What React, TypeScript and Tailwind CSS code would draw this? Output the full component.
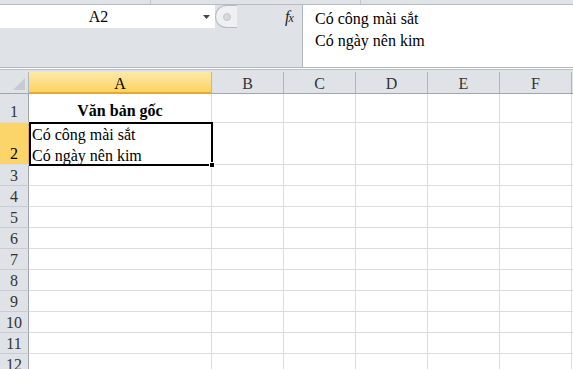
import React from "react";

const cols = ["B", "C", "D", "E", "F"];
const restRows = [3, 4, 5, 6, 7, 8, 9, 10, 11, 12];

export default function App() {
  return (
    <div
      className="w-[573px] h-[369px] overflow-hidden bg-[#dfe3e8] text-black relative"
      style={{ fontFamily: '"Liberation Serif", "Times New Roman", serif' }}
    >
      {/* ribbon bottom strip */}
      <div className="h-[5px] border-b border-[#b6bcc4] flex">
        <div className="w-[151px] border-r border-[#c3c8cf]" />
        <div className="w-[210px] border-r border-[#c3c8cf]" />
      </div>

      {/* formula bar */}
      <div className="h-[63px] flex border-b border-[#b0b6be]">
        <div className="w-[303px] flex flex-col border-r border-[#b0b6be]">
          <div className="h-[23px] flex items-center">
            <div className="w-[215px] h-[23px] bg-white flex items-center relative">
              <div className="flex-1 text-center text-[16px] leading-none">A2</div>
              <div className="w-[18px] flex items-center justify-center">
                <svg width="7" height="4" viewBox="0 0 7 4">
                  <path d="M0 0 H7 L3.5 4 Z" fill="#444" />
                </svg>
              </div>
            </div>
            <div className="h-[23px] w-[22px] flex items-center">
              <div className="w-[22px] h-[23px] rounded-l-full bg-[#eef0f3] border border-[#b7bcc3] border-r-0 flex items-center justify-center">
                <div className="w-[8px] h-[8px] rounded-full bg-[#d5d9de] border border-[#c4c9cf]" />
              </div>
            </div>
            <div className="flex-1" />
            <div
              className="w-[17px] text-[16px] italic text-[#222] leading-none"
              style={{ letterSpacing: "-1px" }}
            >
              f<span className="text-[12px]">x</span>
            </div>
          </div>
          <div className="flex-1" />
        </div>
        <div className="flex-1 bg-white pl-[12px] pt-[3px] text-[16px] leading-[22px]">
          <div>Có công mài sắt</div>
          <div>Có ngày nên kim</div>
        </div>
      </div>

      {/* gap */}
      <div className="h-[2px] bg-white border-b border-[#b9bec5]" />
      <div className="h-[2px]" />

      {/* grid */}
      <div className="bg-white">
        {/* header row */}
        <div className="flex h-[22px] bg-[#dfe3e8] border-b border-[#9fa6ae]">
          <div className="w-[29px] border-r border-[#b0b6be] relative flex-none">
            <svg className="absolute right-[3px] bottom-[3px]" width="12" height="12" viewBox="0 0 12 12">
              <path d="M12 0 V12 H0 Z" fill="#c6cbd2" />
            </svg>
          </div>
          <div className="w-[183px] flex-none flex items-center justify-center pt-[3px] text-[16px] bg-gradient-to-b from-[#fde9a8] to-[#fbd35f] border-r border-[#e6b34c] border-b-2 border-b-[#e8a838] -mb-px">
            A
          </div>
          {cols.map((c) => (
            <div
              key={c}
              className="w-[72px] flex-none flex items-center justify-center pt-[3px] text-[16px] text-[#333] border-r border-[#b0b6be]"
            >
              {c}
            </div>
          ))}
        </div>

        {/* row 1 */}
        <div className="flex h-[29px] border-b border-[#dadcdd]">
          <div className="w-[29px] flex-none bg-[#dfe3e8] border-r border-[#9fa6ae] flex items-end justify-center text-[16px] text-[#333] leading-[20px]">
            1
          </div>
          <div className="w-[183px] flex-none border-r border-[#dadcdd] flex items-end justify-center font-bold text-[16px] leading-[20px] pb-[1px]">
            Văn bản gốc
          </div>
          {cols.map((c) => (
            <div key={c} className="w-[72px] flex-none border-r border-[#dadcdd]" />
          ))}
        </div>

        {/* row 2 */}
        <div className="flex h-[42px] border-b border-[#dadcdd]">
          <div className="w-[29px] flex-none bg-[#fbd56a] border-r border-[#e2b04a] flex items-end justify-center text-[16px] leading-[20px]">
            2
          </div>
          <div className="w-[183px] flex-none border-r border-[#dadcdd] relative text-[16px] leading-[21px] pl-[3px] pt-[1px]">
            <div>Có công mài sắt</div>
            <div>Có ngày nên kim</div>
            <div className="absolute left-0 top-[-1px] w-[184px] h-[44px] border-2 border-black pointer-events-none" />
            <div className="absolute right-[-4px] bottom-[-4px] w-[6px] h-[6px] bg-black border border-white" />
          </div>
          {cols.map((c) => (
            <div key={c} className="w-[72px] flex-none border-r border-[#dadcdd]" />
          ))}
        </div>

        {restRows.map((r) => (
          <div key={r} className="flex h-[21px] border-b border-[#dadcdd]">
            <div className="w-[29px] flex-none bg-[#dfe3e8] border-r border-[#9fa6ae] border-b border-b-[#c8ccd2] -mb-px flex items-end justify-center text-[16px] text-[#333] leading-[19px]">
              {r}
            </div>
            <div className="w-[183px] flex-none border-r border-[#dadcdd]" />
            {cols.map((c) => (
              <div key={c} className="w-[72px] flex-none border-r border-[#dadcdd]" />
            ))}
          </div>
        ))}
      </div>
    </div>
  );
}
